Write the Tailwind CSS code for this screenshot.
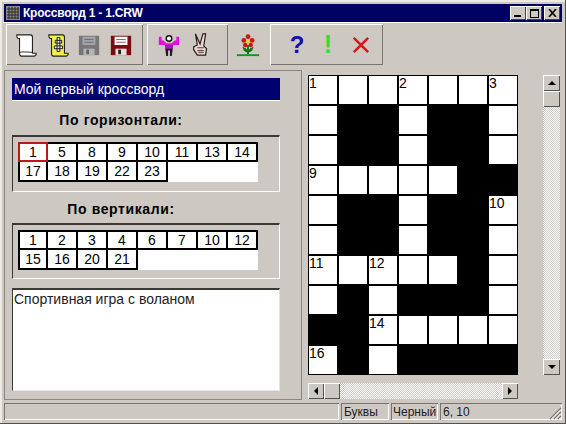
<!DOCTYPE html>
<html lang="ru">
<head>
  <meta charset="UTF-8">
  <title>Кроссворд 1 - 1.CRW</title>
  <script src="https://cdn.jsdelivr.net/npm/@tailwindcss/browser@4"></script>
</head>
<body class="bg-[#cdc9c2]">
  <div class="w-[566px] h-[424px] overflow-hidden flex flex-col bg-[#cdc9c2] pt-[4px] px-[3px] font-['Liberation_Sans',sans-serif] text-black border-r border-b border-[#55524e] shadow-[inset_2px_2px_0_#eeebe5]">

    <!-- title bar -->
    <div class="h-[18px] shrink-0 ml-[1px] bg-[#000064] flex items-center pl-[1px] pr-[2px]">
      <svg class="w-[16px] h-[16px] shrink-0" viewBox="0 0 16 16">
        <rect x="1" y="1" width="14" height="14" fill="#8d8a86"/>
        <path d="M2 4h12M2 7h12M2 10h12M2 13h12M4 2v12M7 2v12M10 2v12M13 2v12" stroke="#2a2a2a" stroke-width="1" fill="none"/>
      </svg>
      <span class="ml-[2px] text-white font-bold text-[12px] tracking-[-0.2px] leading-none">Кроссворд 1 - 1.CRW</span>
      <div class="ml-auto flex">
        <div class="w-[16px] h-[14px] bg-[#cdc9c2] shadow-[inset_1px_1px_0_#fff,inset_-1px_-1px_0_#444] flex items-end justify-center pb-[3px] pr-[2px]"><div class="w-[7px] h-[2px] bg-black"></div></div>
        <div class="w-[16px] h-[14px] bg-[#cdc9c2] shadow-[inset_1px_1px_0_#fff,inset_-1px_-1px_0_#444] flex items-center justify-center"><div class="w-[9px] h-[9px] border border-black border-t-2"></div></div>
        <div class="w-[16px] h-[14px] ml-[2px] bg-[#cdc9c2] shadow-[inset_1px_1px_0_#fff,inset_-1px_-1px_0_#444] flex items-center justify-center">
          <svg class="w-[9px] h-[8px]" viewBox="0 0 9 8"><path d="M1 0l7 8M8 0l-7 8" stroke="#000" stroke-width="1.6"/></svg>
        </div>
      </div>
    </div>

    <!-- toolbar -->
    <div class="h-[48px] shrink-0 flex items-start pt-[1px] border-t border-white">
      <div class="ml-[3px] w-[137px] h-[41px] shadow-[inset_1px_1px_0_#fff,inset_-1px_-1px_0_#77736e] flex items-center pl-[8px] gap-[7.5px] shrink-0">
        <svg class="w-[24px] h-[24px]" viewBox="0 0 26 26">
          <path d="M3 2h15q2 0 2 3v17h4q0 3-2 3H8q-2 0-2-3V6H5q-2 0-2-4z" fill="#fff" stroke="#222" stroke-width="1.2"/>
          <path d="M6 21q3-1 14 0" stroke="#222" fill="none"/>
        </svg>
        <svg class="w-[24px] h-[24px]" viewBox="0 0 26 26">
          <path d="M3 2h15q2 0 2 3v17h4q0 3-2 3H8q-2 0-2-3V6H5q-2 0-2-4z" fill="#f5ee50" stroke="#222" stroke-width="1.2"/>
          <path d="M10 8h7v3h-7zM12 5h3v15h-3zM9 14h9v3H9z" fill="#eee" stroke="#111"/>
        </svg>
        <svg class="w-[24px] h-[24px]" viewBox="0 0 26 26">
          <path d="M2 3h22v21H2z" fill="#77777a"/>
          <path d="M6 4h14v9H6z" fill="#a5a5a5"/>
          <path d="M8 7h10M8 10h10" stroke="#6a6a6a"/>
          <path d="M7 17h12v7H7z" fill="#b5b5b5"/><path d="M10 18h3v5h-3z" fill="#666"/>
        </svg>
        <svg class="w-[24px] h-[24px]" viewBox="0 0 26 26">
          <path d="M2 3h22v21H2z" fill="#7c0a12"/>
          <path d="M6 4h14v9H6z" fill="#fff"/>
          <path d="M8 7h10M8 10h10" stroke="#b04048"/>
          <path d="M7 17h12v7H7z" fill="#e8e0d8"/><path d="M10 18h3v5h-3z" fill="#222"/>
        </svg>
      </div>
      <div class="ml-[4px] w-[81px] h-[41px] shadow-[inset_1px_1px_0_#fff,inset_-1px_-1px_0_#77736e] flex items-center pl-[10px] gap-[8px] shrink-0">
        <svg class="w-[24px] h-[24px]" viewBox="0 0 26 26">
          <path d="M2 8h5l3 3h6l3-3h5v5h-6l-2 2H10l-2-2H2z" fill="#e010d8"/>
          <path d="M2 4h3v5H2zM21 4h3v5h-3z" fill="#e010d8"/>
          <circle cx="13" cy="6" r="3" fill="#fff" stroke="#111" stroke-width="1.5"/>
          <path d="M9 13h8v5l-1 7h-2v-6h-2v6h-2l-1-7z" fill="#30103a"/>
          <path d="M9 13h8v4H9z" fill="#b010c0"/>
        </svg>
        <svg class="w-[24px] h-[24px]" viewBox="0 0 26 26">
          <path d="M7 1l5 11 3-11h3l-2 13 3 3-1 7H9l-4-6v-3l4-2z" fill="#e8d8d0" stroke="#2a1a1a" stroke-width="1.3"/>
          <path d="M9 16h7M9 19h7M10 21h6" stroke="#4a2a2a"/>
        </svg>
      </div>
      <div class="ml-[8px] w-[26px] h-[41px] flex items-center shrink-0">
        <svg class="w-[24px] h-[24px]" viewBox="0 0 26 26">
          <path d="M13 13v10" stroke="#0a7a10" stroke-width="2"/>
          <path d="M1 24h24" stroke="#0a9a10" stroke-width="2"/>
          <path d="M7 15q1 6 6 6q5 0 6-6q-4 1-6 4q-2-3-6-4z" fill="#0a7a10"/>
          <circle cx="13" cy="4" r="2.6" fill="#c81818"/><circle cx="8.5" cy="8" r="2.6" fill="#c81818"/><circle cx="17.500" cy="8" r="2.6" fill="#c81818"/><circle cx="10" cy="13" r="2.4" fill="#c81818"/><circle cx="16" cy="13" r="2.4" fill="#c81818"/>
          <circle cx="13" cy="9" r="2.2" fill="#e8d020"/>
        </svg>
      </div>
      <div class="ml-[8px] w-[113px] h-[41px] shadow-[inset_1px_1px_0_#fff,inset_-1px_-1px_0_#77736e] flex items-center shrink-0">
        <span class="ml-[14px] w-[26px] text-center text-[#1010b0] font-bold text-[24px] leading-none">?</span>
        <span class="ml-[5px] w-[26px] text-center text-[#30e030] font-bold text-[25px] leading-none">!</span>
        <svg class="ml-[11px] w-[18px] h-[18px]" viewBox="0 0 20 20"><path d="M2 2l16 16M18 2L2 18" stroke="#d81818" stroke-width="2.8"/></svg>
      </div>
    </div>

    <!-- body -->
    <div class="h-[330px] shrink-0 flex">

      <!-- left panel -->
      <div class="w-[298px] shrink-0 ml-[1px] shadow-[inset_1px_1px_0_#8a8781,inset_-1px_-1px_0_#8a8781] pl-[8px] pt-[8px] flex flex-col">
        <div class="w-[268px] h-[23px] bg-[#000070] border-b border-white flex items-center pl-[2px] pt-[1px] text-white text-[14px]">Мой первый кроссворд</div>
        <div class="w-[268px] h-[34px] flex items-center justify-center pr-[50px] pt-[4px] font-bold text-[14px] tracking-[0.6px]">По горизонтали:</div>
        <div class="w-[268px] h-[57px] border-t-2 border-l border-t-[#3c3a37] border-l-[#3c3a37] border-r border-b border-r-white border-b-white pl-[5px] pt-[5px]">
          <div class="w-[240px] h-[40px] bg-white grid grid-cols-[repeat(8,30px)] grid-rows-[20px_20px] text-[14px] leading-none">
            <div class="border-2 border-[#c01818] flex items-center justify-center">1</div>
            <div class="border-2 border-l-0 border-black flex items-center justify-center">5</div>
            <div class="border-2 border-l-0 border-black flex items-center justify-center">8</div>
            <div class="border-2 border-l-0 border-black flex items-center justify-center">9</div>
            <div class="border-2 border-l-0 border-black flex items-center justify-center">10</div>
            <div class="border-2 border-l-0 border-black flex items-center justify-center">11</div>
            <div class="border-2 border-l-0 border-black flex items-center justify-center">13</div>
            <div class="border-2 border-l-0 border-black flex items-center justify-center">14</div>
            <div class="border-2 border-t-0 border-black flex items-center justify-center">17</div>
            <div class="border-2 border-t-0 border-l-0 border-black flex items-center justify-center">18</div>
            <div class="border-2 border-t-0 border-l-0 border-black flex items-center justify-center">19</div>
            <div class="border-2 border-t-0 border-l-0 border-black flex items-center justify-center">22</div>
            <div class="border-2 border-t-0 border-l-0 border-black flex items-center justify-center">23</div>
          </div>
        </div>
        <div class="w-[268px] h-[31px] flex items-center justify-center pr-[50px] pt-[3px] font-bold text-[14px] tracking-[0.6px]">По вертикали:</div>
        <div class="w-[268px] h-[56px] border-t-2 border-l border-t-[#3c3a37] border-l-[#3c3a37] border-r border-b border-r-white border-b-white pl-[5px] pt-[5px]">
          <div class="w-[240px] h-[40px] bg-white grid grid-cols-[repeat(8,30px)] grid-rows-[20px_20px] text-[14px] leading-none">
            <div class="border-2 border-black flex items-center justify-center">1</div>
            <div class="border-2 border-l-0 border-black flex items-center justify-center">2</div>
            <div class="border-2 border-l-0 border-black flex items-center justify-center">3</div>
            <div class="border-2 border-l-0 border-black flex items-center justify-center">4</div>
            <div class="border-2 border-l-0 border-black flex items-center justify-center">6</div>
            <div class="border-2 border-l-0 border-black flex items-center justify-center">7</div>
            <div class="border-2 border-l-0 border-black flex items-center justify-center">10</div>
            <div class="border-2 border-l-0 border-black flex items-center justify-center">12</div>
            <div class="border-2 border-t-0 border-black flex items-center justify-center">15</div>
            <div class="border-2 border-t-0 border-l-0 border-black flex items-center justify-center">16</div>
            <div class="border-2 border-t-0 border-l-0 border-black flex items-center justify-center">20</div>
            <div class="border-2 border-t-0 border-l-0 border-black flex items-center justify-center">21</div>
          </div>
        </div>
        <div class="mt-[9px] w-[268px] h-[103px] bg-white border-t-2 border-l border-t-[#3c3a37] border-l-[#3c3a37] border-r border-b border-r-[#e8e5df] border-b-[#e8e5df] pl-[1px] pt-[1px] text-[14px] leading-[17px] text-[#222]">Спортивная игра с воланом</div>
      </div>

      <!-- right panel -->
      <div class="ml-[6px] flex flex-col pt-[5px]">
        <div class="flex">
          <div class="w-[210px] h-[300px] bg-black border border-black grid grid-cols-[repeat(7,28px)] grid-rows-[repeat(10,28px)] gap-[2px] text-[14px] leading-[15px]">
            <div class="bg-white">1</div><div class="bg-white"></div><div class="bg-white"></div><div class="bg-white">2</div><div class="bg-white"></div><div class="bg-white"></div><div class="bg-white">3</div>
            <div class="bg-white"></div><div></div><div></div><div class="bg-white"></div><div></div><div></div><div class="bg-white"></div>
            <div class="bg-white"></div><div></div><div></div><div class="bg-white"></div><div></div><div></div><div class="bg-white"></div>
            <div class="bg-white">9</div><div class="bg-white"></div><div class="bg-white"></div><div class="bg-white"></div><div class="bg-white"></div><div></div><div></div>
            <div class="bg-white"></div><div></div><div></div><div class="bg-white"></div><div></div><div></div><div class="bg-white">10</div>
            <div class="bg-white"></div><div></div><div></div><div class="bg-white"></div><div></div><div></div><div class="bg-white"></div>
            <div class="bg-white">11</div><div class="bg-white"></div><div class="bg-white">12</div><div class="bg-white"></div><div class="bg-white"></div><div></div><div class="bg-white"></div>
            <div class="bg-white"></div><div></div><div class="bg-white"></div><div></div><div></div><div></div><div class="bg-white"></div>
            <div></div><div></div><div class="bg-white">14</div><div class="bg-white"></div><div class="bg-white"></div><div class="bg-white"></div><div class="bg-white"></div>
            <div class="bg-white">16</div><div></div><div class="bg-white"></div><div></div><div></div><div></div><div></div>
          </div>
          <!-- vertical scrollbar -->
          <div class="ml-[25px] w-[17px] h-[300px] flex flex-col bg-[repeating-conic-gradient(#fff_0_25%,#cdc9c2_0_50%)] bg-[length:2px_2px]">
            <div class="h-[16px] bg-[#cdc9c2] shadow-[inset_1px_1px_0_#fff,inset_-1px_-1px_0_#55524e] flex items-center justify-center"><div class="w-0 h-0 border-x-[4px] border-x-transparent border-b-[4px] border-b-black"></div></div>
            <div class="h-[16px] bg-[#cdc9c2] shadow-[inset_1px_1px_0_#fff,inset_-1px_-1px_0_#55524e]"></div>
            <div class="mt-auto h-[16px] bg-[#cdc9c2] shadow-[inset_1px_1px_0_#fff,inset_-1px_-1px_0_#55524e] flex items-center justify-center"><div class="w-0 h-0 border-x-[4px] border-x-transparent border-t-[4px] border-t-black"></div></div>
          </div>
        </div>
        <!-- horizontal scrollbar -->
        <div class="mt-[8px] w-[210px] h-[16px] flex bg-[repeating-conic-gradient(#fff_0_25%,#cdc9c2_0_50%)] bg-[length:2px_2px]">
          <div class="w-[16px] bg-[#cdc9c2] shadow-[inset_1px_1px_0_#fff,inset_-1px_-1px_0_#55524e] flex items-center justify-center"><div class="w-0 h-0 border-y-[4px] border-y-transparent border-r-[4px] border-r-black"></div></div>
          <div class="w-[16px] bg-[#cdc9c2] shadow-[inset_1px_1px_0_#fff,inset_-1px_-1px_0_#55524e]"></div>
          <div class="ml-auto w-[16px] bg-[#cdc9c2] shadow-[inset_1px_1px_0_#fff,inset_-1px_-1px_0_#55524e] flex items-center justify-center"><div class="w-0 h-0 border-y-[4px] border-y-transparent border-l-[4px] border-l-black"></div></div>
        </div>
      </div>
    </div>

    <!-- status bar -->
    <div class="h-[17px] mt-[3px] shrink-0 flex text-[12px] leading-none text-[#222]">
      <div class="ml-[1px] w-[335px] shadow-[inset_1px_1px_0_#77736e,inset_-1px_-1px_0_#fff]"></div>
      <div class="ml-[2px] w-[48px] pl-[3px] flex items-center shadow-[inset_1px_1px_0_#77736e,inset_-1px_-1px_0_#fff]">Буквы</div>
      <div class="ml-[2px] w-[47px] pl-[2px] flex items-center shadow-[inset_1px_1px_0_#77736e,inset_-1px_-1px_0_#fff]">Черный</div>
      <div class="ml-[2px] flex-1 pl-[3px] flex items-center shadow-[inset_1px_1px_0_#77736e,inset_-1px_-1px_0_#fff] relative">6, 10
        <svg class="absolute right-0 bottom-0 w-[13px] h-[13px]" viewBox="0 0 13 13"><path d="M12 1L1 12M12 5L5 12M12 9L9 12" stroke="#77736e" stroke-width="1.2"/><path d="M12 2.5L2.5 12M12 6.5L6.5 12M12 10.5L10.5 12" stroke="#fff"/></svg>
      </div>
    </div>
  </div>
</body>
</html>
